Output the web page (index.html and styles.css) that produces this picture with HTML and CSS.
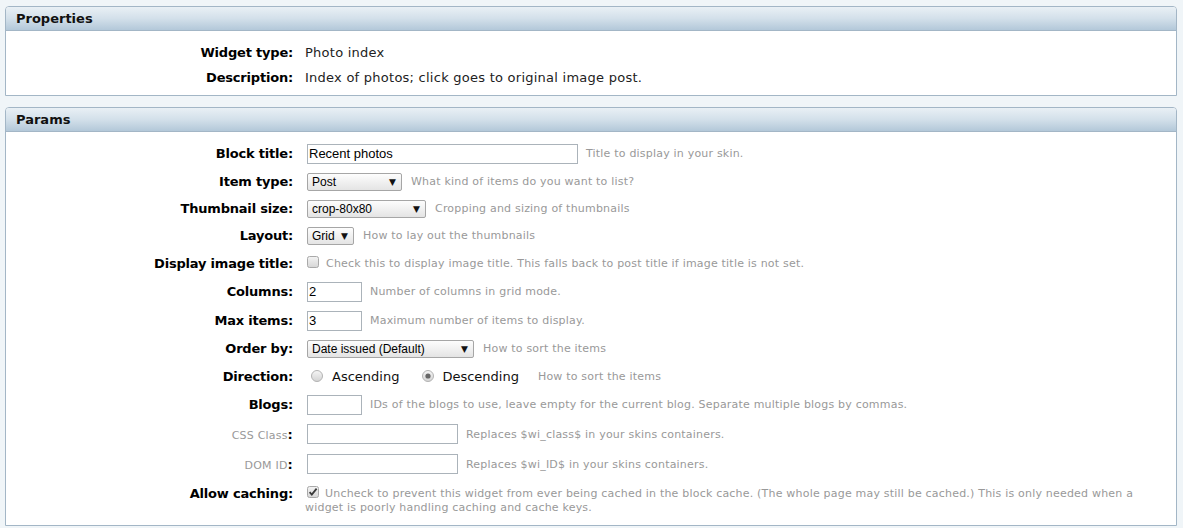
FILE: index.html
```html
<!DOCTYPE html>
<html>
<head>
<meta charset="utf-8">
<title>Widget</title>
<link rel="stylesheet" href="styles.css">
</head>
<body>
<div class="panel">
  <div class="panel-head">Properties</div>
  <div class="panel-body props">
    <div class="prow"><div class="label">Widget type:</div><div class="value pv">Photo index</div></div>
    <div class="prow"><div class="label">Description:</div><div class="value pv">Index of photos; click goes to original image post.</div></div>
  </div>
</div>

<div class="panel">
  <div class="panel-head">Params</div>
  <div class="panel-body params">
    <div class="row r-input">
      <div class="label">Block title:</div>
      <div class="value"><input class="text w-long" type="text" value="Recent photos"><span class="note">Title to display in your skin.</span></div>
    </div>
    <div class="row r-select">
      <div class="label">Item type:</div>
      <div class="value"><span class="select w-post"><select><option>Post</option></select><span class="arrow">▼</span></span><span class="note">What kind of items do you want to list?</span></div>
    </div>
    <div class="row r-select">
      <div class="label">Thumbnail size:</div>
      <div class="value"><span class="select w-crop"><select><option>crop-80x80</option></select><span class="arrow">▼</span></span><span class="note">Cropping and sizing of thumbnails</span></div>
    </div>
    <div class="row r-select">
      <div class="label">Layout:</div>
      <div class="value"><span class="select w-grid"><select><option>Grid</option></select><span class="arrow">▼</span></span><span class="note">How to lay out the thumbnails</span></div>
    </div>
    <div class="row">
      <div class="label">Display image title:</div>
      <div class="value"><svg class="check" width="12" height="12" viewBox="0 0 12 12"><defs><linearGradient id="cg1" x1="0" y1="0" x2="0" y2="1"><stop offset="0" stop-color="#f4f4f4"/><stop offset="1" stop-color="#d6d6d6"/></linearGradient></defs><rect x="0.5" y="0.5" width="11" height="11" rx="2" fill="url(#cg1)" stroke="#a9a9a9"/></svg><span class="note nc">Check this to display image title. This falls back to post title if image title is not set.</span></div>
    </div>
    <div class="row r-input">
      <div class="label">Columns:</div>
      <div class="value"><input class="text w-short" type="text" value="2"><span class="note">Number of columns in grid mode.</span></div>
    </div>
    <div class="row r-input">
      <div class="label">Max items:</div>
      <div class="value"><input class="text w-short" type="text" value="3"><span class="note">Maximum number of items to display.</span></div>
    </div>
    <div class="row r-select">
      <div class="label">Order by:</div>
      <div class="value"><span class="select w-order"><select><option>Date issued (Default)</option></select><span class="arrow">▼</span></span><span class="note">How to sort the items</span></div>
    </div>
    <div class="row">
      <div class="label">Direction:</div>
      <div class="value">
        <span class="radio-opt"><svg class="radio" width="12" height="12" viewBox="0 0 12 12"><defs><linearGradient id="rg1" x1="0" y1="0" x2="0" y2="1"><stop offset="0" stop-color="#f6f6f6"/><stop offset="1" stop-color="#d2d2d2"/></linearGradient></defs><circle cx="6" cy="6" r="5.5" fill="url(#rg1)" stroke="#b3b3b3"/></svg><span class="opt-text">Ascending</span></span>
        <span class="radio-opt second"><svg class="radio" width="12" height="12" viewBox="0 0 12 12"><circle cx="6" cy="6" r="5.5" fill="url(#rg1)" stroke="#b3b3b3"/><circle cx="6" cy="6" r="2.6" fill="#666"/></svg><span class="opt-text">Descending</span></span>
        <span class="note ndir">How to sort the items</span>
      </div>
    </div>
    <div class="row r-input">
      <div class="label">Blogs:</div>
      <div class="value"><input class="text w-short" type="text" value=""><span class="note">IDs of the blogs to use, leave empty for the current blog. Separate multiple blogs by commas.</span></div>
    </div>
    <div class="row r-input r-tall">
      <div class="label light">CSS Class<b>:</b></div>
      <div class="value"><input class="text w-mid" type="text" value=""><span class="note">Replaces $wi_class$ in your skins containers.</span></div>
    </div>
    <div class="row r-input r-tall">
      <div class="label light">DOM ID<b>:</b></div>
      <div class="value"><input class="text w-mid" type="text" value=""><span class="note">Replaces $wi_ID$ in your skins containers.</span></div>
    </div>
    <div class="row r-top">
      <div class="label">Allow caching:</div>
      <div class="value block"><svg class="check inline" width="12" height="12" viewBox="0 0 12 12"><defs><linearGradient id="cg2" x1="0" y1="0" x2="0" y2="1"><stop offset="0" stop-color="#f4f4f4"/><stop offset="1" stop-color="#d6d6d6"/></linearGradient></defs><rect x="0.5" y="0.5" width="11" height="11" rx="2" fill="url(#cg2)" stroke="#a9a9a9"/><path d="M2.6 6.2 L4.8 8.6 L9.6 2.6" fill="none" stroke="#3a3a3a" stroke-width="1.8"/></svg><span class="note nc2">Uncheck to prevent this widget from ever being cached in the block cache. (The whole page may still be cached.) This is only needed when a widget is poorly handling caching and cache keys.</span></div>
    </div>
  </div>
</div>
</body>
</html>
```

FILE: styles.css
```css
html, body {
  margin: 0;
  padding: 0;
}
body {
  background: #f0f5f8;
  padding: 6px 6px 0 5px;
  font-family: "DejaVu Sans", Verdana, sans-serif;
  font-size: 13px;
  color: #222;
}
.panel {
  border: 1px solid #a3b6c6;
  border-radius: 4px 4px 0 0;
  background: #fff;
  margin-bottom: 11px;
}
.panel-head {
  height: 23px;
  line-height: 24px;
  padding-left: 10px;
  font-weight: bold;
  font-size: 13px;
  color: #111;
  border-bottom: 1px solid #a3b6c6;
  border-radius: 3px 3px 0 0;
  background: linear-gradient(#e9f0f5 0%, #d3e0ea 50%, #b3c8d9 100%);
}
.panel-body.props {
  padding: 9px 0 5px;
}
.prow {
  display: flex;
  align-items: center;
  height: 25px;
}
.label {
  width: 287px;
  flex: none;
  text-align: right;
  font-weight: bold;
  color: #000;
  margin-right: 12px;
  letter-spacing: -0.2px;
}
.label.light {
  font-weight: normal;
  font-size: 11px;
  color: #999;
  letter-spacing: 0.2px;
}
.label.light b {
  color: #000;
  font-size: 13px;
}
.value {
  display: flex;
  align-items: center;
  flex: 1;
  min-width: 0;
}
.value.pv {
  letter-spacing: 0.25px;
}
.panel-body.params {
  padding: 7px 0 11px;
}
.row {
  display: flex;
  align-items: center;
  min-height: 28px;
}
.row.r-input { min-height: 29px; }
.row.r-select { min-height: 27px; }
.row.r-tall { min-height: 30px; }
.row.r-top {
  align-items: flex-start;
  padding-top: 7px;
}
.row.r-top .label { line-height: 16px; }
.text {
  box-sizing: border-box;
  height: 20px;
  margin: 0 8px 0 2px;
  padding: 1px 1px;
  border: 1px solid #abb3ba;
  font-family: "Liberation Sans", Arial, sans-serif;
  font-size: 13px;
  color: #000;
  background: #fff;
  outline: none;
}
.w-long { width: 271px; }
.w-short { width: 55px; }
.w-mid { width: 151px; }
.select {
  display: inline-grid;
  box-sizing: border-box;
  height: 18px;
  margin: 0 9px 0 2px;
  border: 1px solid #a6a6a6;
  border-radius: 2px;
  background: linear-gradient(#fdfdfd, #e4e4e4);
}
.select select, .select .arrow {
  grid-area: 1 / 1;
}
.select select {
  -webkit-appearance: none;
  appearance: none;
  border: 0;
  background: transparent;
  margin: 0;
  padding: 0 0 0 4px;
  height: 16px;
  font-family: "Liberation Sans", Arial, sans-serif;
  font-size: 12px;
  color: #000;
  outline: none;
}
.select .arrow {
  justify-self: end;
  align-self: center;
  font-size: 9px;
  color: #111;
  margin-right: 5px;
  pointer-events: none;
}
.w-post { width: 95px; }
.w-crop { width: 119px; }
.w-grid { width: 47px; }
.w-order { width: 167px; }
.note {
  font-size: 11px;
  color: #999;
  white-space: nowrap;
  letter-spacing: 0.2px;
}
.check {
  flex: none;
  margin: 0 7px 0 2px;
  position: relative;
  top: -1px;
}
.radio-opt {
  display: inline-flex;
  align-items: center;
}
.radio {
  margin: 0 9px 0 6px;
}
.radio-opt.second { margin-left: 23px; }
.radio-opt.second .radio { margin-left: 0; margin-right: 8px; }
.opt-text {
  font-size: 13px;
  color: #111;
}
.ndir { margin-left: 19px; }
.value.block {
  display: block;
  line-height: 13px;
  padding-right: 30px;
}
.check.inline {
  vertical-align: -1px;
  margin: 0 6px 0 2px;
  top: 0;
}
.nc2 {
  white-space: normal;
}
```
